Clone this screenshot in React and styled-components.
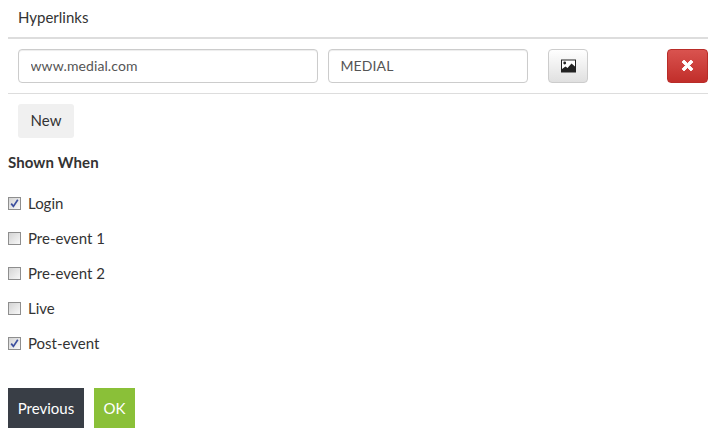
import React from "react";
import styled, { createGlobalStyle } from "styled-components";

const Global = createGlobalStyle`
  html, body { margin: 0; padding: 0; background: #fff; }
  body { font-family: Lato, "Liberation Sans", sans-serif; font-size: 15px; color: #333; }
`;
const Page = styled.div`
  padding: 0 9px 0 8px;
  width: 717px;
  height: 445px;
  box-sizing: border-box;
  overflow: hidden;
`;
const Header = styled.div`
  height: 37px;
  padding: 0 10px;
  line-height: 34px;
  font-size: 15px;
  color: #333;
  border-bottom: 2px solid #ddd;
`;
const LinkRow = styled.div`
  display: flex;
  align-items: center;
  height: 54px;
  padding: 0 0 0 10px;
  border-bottom: 1px solid #ddd;
`;
const TextInput = styled.input`
  width: ${p => p.$w}px;
  height: 34px;
  box-sizing: border-box;
  margin-right: ${p => p.$mr}px;
  padding: 0 12px 1px 11.5px;
  border: 1px solid #ccc;
  border-radius: 4px;
  font: 14px Lato, "Liberation Sans", sans-serif;
  letter-spacing: 0.1px;
  color: #555;
  background: #fff;
  box-shadow: inset 0 1px 1px rgba(0, 0, 0, 0.075);
`;
const ImageButton = styled.button`
  width: 40px;
  height: 34px;
  padding: 0 0 1px;
  display: flex;
  align-items: center;
  justify-content: center;
  border: 1px solid #ccc;
  border-radius: 4px;
  background: linear-gradient(#fff, #e0e0e0);
`;
const DeleteButton = styled.button`
  width: 41px;
  height: 34px;
  margin-left: 79px;
  padding: 0 0 1px;
  display: flex;
  align-items: center;
  justify-content: center;
  border: 1px solid #b92c28;
  border-radius: 4px;
  background: linear-gradient(#d9534f, #c12e2a);
`;
const NewButton = styled.button`
  display: block;
  width: 56px;
  height: 34px;
  margin: 10px 0 0 10px;
  padding: 0 0 2px;
  border: 0;
  border-radius: 3px;
  background: #f0f0f0;
  font: 15px Lato, "Liberation Sans", sans-serif;
  color: #333;
`;
const SectionTitle = styled.div`
  margin-top: 14px;
  font-size: 15px;
  line-height: 20px;
  font-weight: 700;
  letter-spacing: 0.1px;
  color: #333;
`;
const CheckList = styled.div`
  display: flex;
  flex-direction: column;
  margin-top: 13px;
`;
const CheckRow = styled.label`
  display: flex;
  align-items: center;
  height: 35px;
  gap: 7px;
  font-size: 15px;
  line-height: 18px;
  color: #333;
`;
const Box = styled.span`
  width: 13px;
  height: 13px;
  margin-top: 2px;
  box-sizing: border-box;
  border: 1px solid #8e8e8e;
  background: linear-gradient(135deg, #d4d4d4, #f8f8f8);
  display: block;
  flex: none;
  & svg { display: block; }
`;
const Footer = styled.div`
  display: flex;
  gap: 10px;
  margin-top: 28px;
`;
const ActionButton = styled.button`
  height: 40px;
  width: ${p => p.$w}px;
  padding: 0;
  border: 0;
  background: ${p => p.$bg};
  color: #fff;
  font: 15px Lato, "Liberation Sans", sans-serif;
`;

const items = [
  ["Login", true],
  ["Pre-event 1", false],
  ["Pre-event 2", false],
  ["Live", false],
  ["Post-event", true],
];

export default function App() {
  return (
    <Page>
      <Global />
      <Header>Hyperlinks</Header>
      <LinkRow>
        <TextInput $w={300} $mr={10} defaultValue="www.medial.com" />
        <TextInput $w={200} $mr={20} defaultValue="MEDIAL" />
        <ImageButton aria-label="Image">
          <svg width="15" height="14" viewBox="0 0 15 14">
            <rect x="0" y="0.5" width="15" height="13" fill="#222" />
            <rect x="1" y="1.5" width="13" height="11" fill="#fff" />
            <circle cx="3.7" cy="4" r="1.4" fill="#222" />
            <path d="M1 13V10L4.5 7.5 6.5 9 10.5 4.5 14 7.5V13Z" fill="#222" />
          </svg>
        </ImageButton>
        <DeleteButton aria-label="Delete">
          <svg width="13" height="13" viewBox="0 0 12 12">
            <path d="M2.8 1 6 4.2 9.2 1 11 2.8 7.8 6 11 9.2 9.2 11 6 7.8 2.8 11 1 9.2 4.2 6 1 2.8Z" fill="#fff" stroke="#fff" strokeWidth="0.9" strokeLinejoin="round" />
          </svg>
        </DeleteButton>
      </LinkRow>
      <NewButton>New</NewButton>
      <SectionTitle>Shown When</SectionTitle>
      <CheckList>
        {items.map(([label, on]) => (
          <CheckRow key={label}>
            <Box>
              {on && (
                <svg width="11" height="11" viewBox="0 0 11 11">
                  <path d="M2.2 5.6 4.4 8.4 8.8 1.8" fill="none" stroke="#3c4f9e" strokeWidth="1.7" />
                </svg>
              )}
            </Box>
            {label}
          </CheckRow>
        ))}
      </CheckList>
      <Footer>
        <ActionButton $w={76} $bg="#393e46">Previous</ActionButton>
        <ActionButton $w={41} $bg="#8ac038">OK</ActionButton>
      </Footer>
    </Page>
  );
}
